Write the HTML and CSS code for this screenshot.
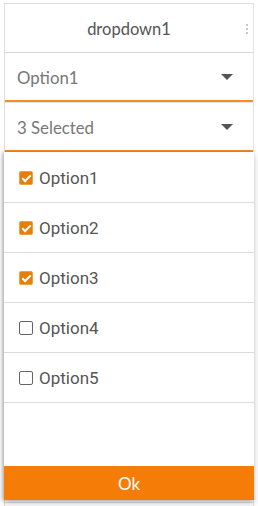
FILE: index.html
```html
<!DOCTYPE html>
<html>
<head>
<meta charset="utf-8">
<link rel="stylesheet" href="styles.css">
</head>
<body>
<div class="sheet">
  <div class="header">
    <span class="title">dropdown1</span>
    <span class="kebab"><i></i><i></i><i></i></span>
  </div>
  <div class="cell">
    <div class="select"><span class="value">Option1</span><span class="caret"></span></div>
  </div>
  <div class="cell">
    <div class="select"><span class="value">3 Selected</span><span class="caret"></span></div>
  </div>
  <div class="cell plain"></div>
  <div class="cell plain"></div>
  <div class="cell plain"></div>
  <div class="cell plain"></div>
  <div class="cell plain"></div>
  <div class="cell plain"></div>
  <div class="cell plain"></div>
</div>

<div class="popup">
  <ul class="options">
    <li class="option"><span class="box checked"></span><span>Option1</span></li>
    <li class="option"><span class="box checked"></span><span>Option2</span></li>
    <li class="option"><span class="box checked"></span><span>Option3</span></li>
    <li class="option"><span class="box"></span><span>Option4</span></li>
    <li class="option"><span class="box"></span><span>Option5</span></li>
  </ul>
  <div class="spacer"></div>
  <button class="ok">Ok</button>
</div>
</body>
</html>
```

FILE: styles.css
```css
html, body {
  margin: 0;
  padding: 0;
  background: #fff;
  overflow: hidden;
}
body {
  width: 258px;
  height: 506px;
  position: relative;
  font-family: Lato, "Open Sans", sans-serif;
}
.sheet {
  margin: 3px 0 0 4px;
  width: 250px;
  box-sizing: border-box;
  border-top: 1px solid #dcdcdc;
  border-left: 1px solid #dcdcdc;
  border-right: 1px solid #e4e4e4;
  height: 503px;
}
.header {
  height: 48px;
  border-bottom: 1px solid #d8d8d8;
  display: flex;
  align-items: center;
  justify-content: center;
  position: relative;
}
.title {
  font-size: 16.5px;
  color: #555;
  padding-top: 2px;
}
.kebab {
  position: absolute;
  right: 5px;
  top: 20px;
  display: flex;
  flex-direction: column;
  gap: 2px;
}
.kebab i {
  display: block;
  width: 2px;
  height: 2px;
  background: #c8c8c8;
}
.cell {
  height: 49px;
  border-bottom: 1px solid #e2e2e2;
}
.select {
  height: 47px;
  border-bottom: 2px solid #fb8c1e;
  display: flex;
  align-items: center;
  justify-content: space-between;
  padding: 0 20px 0 12px;
}
.value {
  font-size: 16.8px;
  color: #777;
  padding-top: 1px;
}
.caret {
  width: 0;
  height: 0;
  border-left: 6px solid transparent;
  border-right: 6px solid transparent;
  border-top: 6px solid #555;
}
.popup {
  position: absolute;
  left: 4px;
  top: 152px;
  width: 250px;
  height: 348px;
  background: #fff;
  box-shadow: 0 3px 6px rgba(0, 0, 0, 0.25), -2px 0 3px rgba(0, 0, 0, 0.18);
  display: flex;
  flex-direction: column;
  padding-top: 1px;
  box-sizing: border-box;
}
.options {
  list-style: none;
  margin: 0;
  padding: 0;
}
.option {
  height: 49px;
  border-bottom: 1px solid #dcdcdc;
  display: flex;
  align-items: center;
  gap: 6px;
  padding-left: 15px;
  font-family: Roboto, sans-serif;
  font-size: 17px;
  color: #555;
}
.box {
  width: 12px;
  height: 12px;
  border: 1px solid #666;
  border-radius: 2px;
  position: relative;
  margin-top: 1px;
}
.box.checked {
  background: #e67e0a;
  border-color: #f0a040;
}
.box.checked::after {
  content: "";
  position: absolute;
  left: 4px;
  top: 1px;
  width: 3px;
  height: 7px;
  border: solid #fff;
  border-width: 0 2px 2px 0;
  transform: rotate(45deg);
}
.spacer {
  flex: 1;
}
.ok {
  height: 34px;
  border: 0;
  margin: 0;
  background: #f57c06;
  color: #fff;
  font-family: Lato, "Open Sans", sans-serif;
  font-size: 17px;
  padding: 0;
}
```
